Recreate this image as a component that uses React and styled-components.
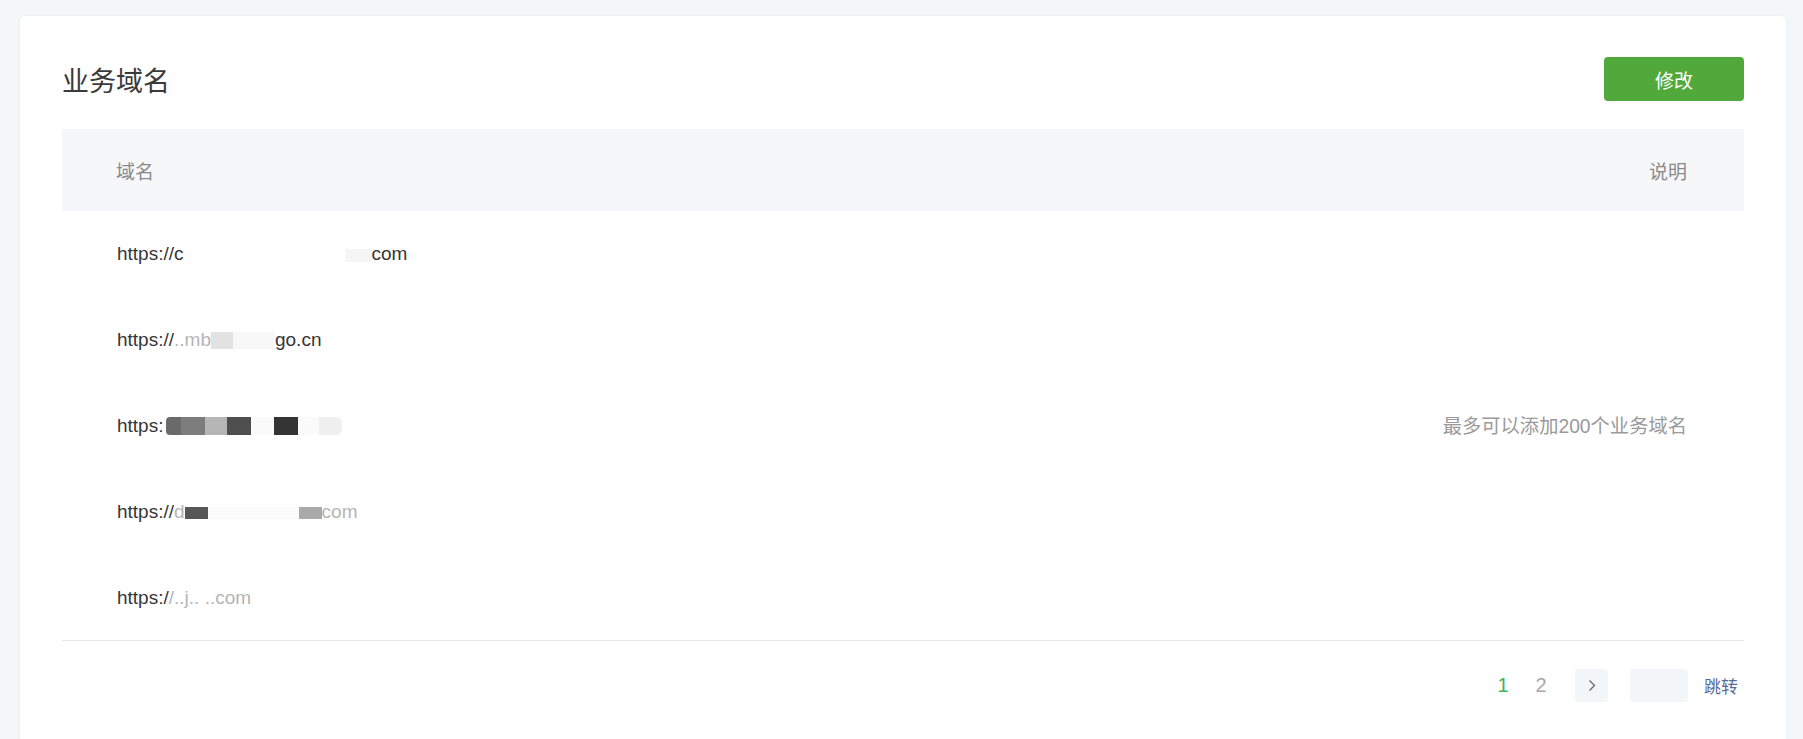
import styled, { createGlobalStyle } from "styled-components";

const GlobalStyle = createGlobalStyle`
    html, body {
        margin: 0;
        padding: 0;
        background-color: #f5f6f8;
        font-family: "Liberation Sans", "Noto Sans CJK SC", sans-serif;
    }
`

const domains = [
    [{ t: "https://c" }, { m: "#ffffff", w: 161 }, { m: "#f5f5f5", w: 27, h: 13 }, { t: "com" }],
    [{ t: "https://" }, { f: "..mb" }, { m: "#e2e2e2", w: 22, h: 17 }, { m: "#f8f8f8", w: 42, h: 17 }, { t: "go.cn" }],
    [
        { t: "https:" },
        { m: "#ffffff", w: 3 },
        { m: "#6a6a6a", w: 15, h: 18, r: "4px 0 0 4px" },
        { m: "#7d7d7d", w: 24, h: 18 },
        { m: "#b6b6b6", w: 22, h: 18 },
        { m: "#4e4e4e", w: 24, h: 18 },
        { m: "#fafafa", w: 23, h: 18 },
        { m: "#343434", w: 24, h: 18 },
        { m: "#fbfbfb", w: 21, h: 18 },
        { m: "#efefef", w: 23, h: 18, r: "0 6px 6px 0" },
    ],
    [{ t: "https://" }, { f: "d" }, { m: "#575757", w: 23, h: 12 }, { m: "#fbfbfb", w: 91, h: 12 }, { m: "#a9a9a9", w: 23, h: 12 }, { f: "com" }],
    [{ t: "https:/" }, { f: "/..j.. ..com" }],
]

export default () => {
    return (
        <>
            <GlobalStyle />
            <Page>
                <Card>
                    <Header>
                        <Title>业务域名</Title>
                        <Button>修改</Button>
                    </Header>
                    <Table>
                        <thead>
                            <tr>
                                <Th>域名</Th>
                                <Th align="right">说明</Th>
                            </tr>
                        </thead>
                        <tbody>
                            {domains.map((parts, i) => (
                                <tr key={i}>
                                    <Td>
                                        {parts.map((p, j) => {
                                            if (p.t) return <span key={j}>{p.t}</span>
                                            if (p.f) return <Faded key={j}>{p.f}</Faded>
                                            return <Mask key={j} color={p.m} w={p.w} h={p.h || 14} r={p.r} />
                                        })}
                                    </Td>
                                    {i === 0 && <Note rowSpan={5}>最多可以添加200个业务域名</Note>}
                                </tr>
                            ))}
                        </tbody>
                    </Table>
                    <Pager>
                        <PageNum active>1</PageNum>
                        <PageNum>2</PageNum>
                        <NextBtn>
                            <svg width="8" height="13" viewBox="0 0 8 13">
                                <polyline points="1.5,1.5 6.5,6.5 1.5,11.5" fill="none" stroke="#666" strokeWidth="1.3" />
                            </svg>
                        </NextBtn>
                        <JumpInput />
                        <JumpLink>跳转</JumpLink>
                    </Pager>
                </Card>
            </Page>
        </>
    )
}

const Page = styled.div`
    padding: 16px 17px 0 20px;
    height: 739px;
    overflow: hidden;
    box-sizing: border-box;
`

const Card = styled.div`
    background-color: #fff;
    border-radius: 5px;
    box-shadow: 0 0 3px rgba(0, 0, 0, 0.06);
    padding: 41px 42px 80px 42px;
    min-height: 760px;
    box-sizing: border-box;
`

const Header = styled.div`
    display: flex;
    justify-content: space-between;
    align-items: center;
    height: 44px;
    margin-bottom: 28px;
`

const Title = styled.h2`
    margin: 0;
    font-size: 27px;
    font-weight: 400;
    color: #3a3a3a;
`

const Button = styled.button`
    width: 140px;
    height: 44px;
    border: none;
    border-radius: 4px;
    background-color: #51a93b;
    color: #fff;
    font-family: inherit;
    font-size: 19px;
    cursor: pointer;
`

const Table = styled.table`
    width: 100%;
    border-collapse: collapse;
    border-bottom: 1px solid #e6e6e6;
`

const Th = styled.th`
    height: 82px;
    padding: 0 57px 0 54px;
    background-color: #f6f7f9;
    color: #8a8a8a;
    font-size: 19px;
    font-weight: 400;
    text-align: ${({ align }) => align || "left"};
`

const Td = styled.td`
    height: 85.8px;
    padding: 0 0 0 55px;
    color: #353535;
    font-size: 19px;
    white-space: nowrap;
    line-height: 1;
`

const Faded = styled.span`
    color: #b5b5b5;
`

const Mask = styled.span`
    display: inline-block;
    width: ${({ w }) => w}px;
    height: ${({ h }) => h}px;
    background-color: ${({ color }) => color};
    border-radius: ${({ r }) => r || "0"};
    vertical-align: middle;
`

const Note = styled.td`
    padding: 0 57px 0 0;
    text-align: right;
    vertical-align: middle;
    color: #9a9a9a;
    font-size: 19.3px;
`

const Pager = styled.div`
    display: flex;
    justify-content: flex-end;
    align-items: center;
    margin-top: 28px;
    padding-right: 6px;
    height: 33px;
`

const PageNum = styled.span`
    width: 38px;
    text-align: center;
    font-size: 20px;
    color: ${({ active }) => active ? "#3cb55a" : "#a8a8a8"};
    cursor: pointer;
`

const NextBtn = styled.span`
    display: flex;
    align-items: center;
    justify-content: center;
    width: 33px;
    height: 33px;
    margin-left: 15px;
    border-radius: 3px;
    background-color: #f4f5f7;
`

const JumpInput = styled.input`
    width: 58px;
    height: 33px;
    margin-left: 22px;
    padding: 0;
    border: none;
    border-radius: 3px;
    background-color: #f4f5f7;
    box-sizing: border-box;
    outline: none;
`

const JumpLink = styled.span`
    margin-left: 16px;
    font-size: 17px;
    color: #5a6b96;
    cursor: pointer;
`
